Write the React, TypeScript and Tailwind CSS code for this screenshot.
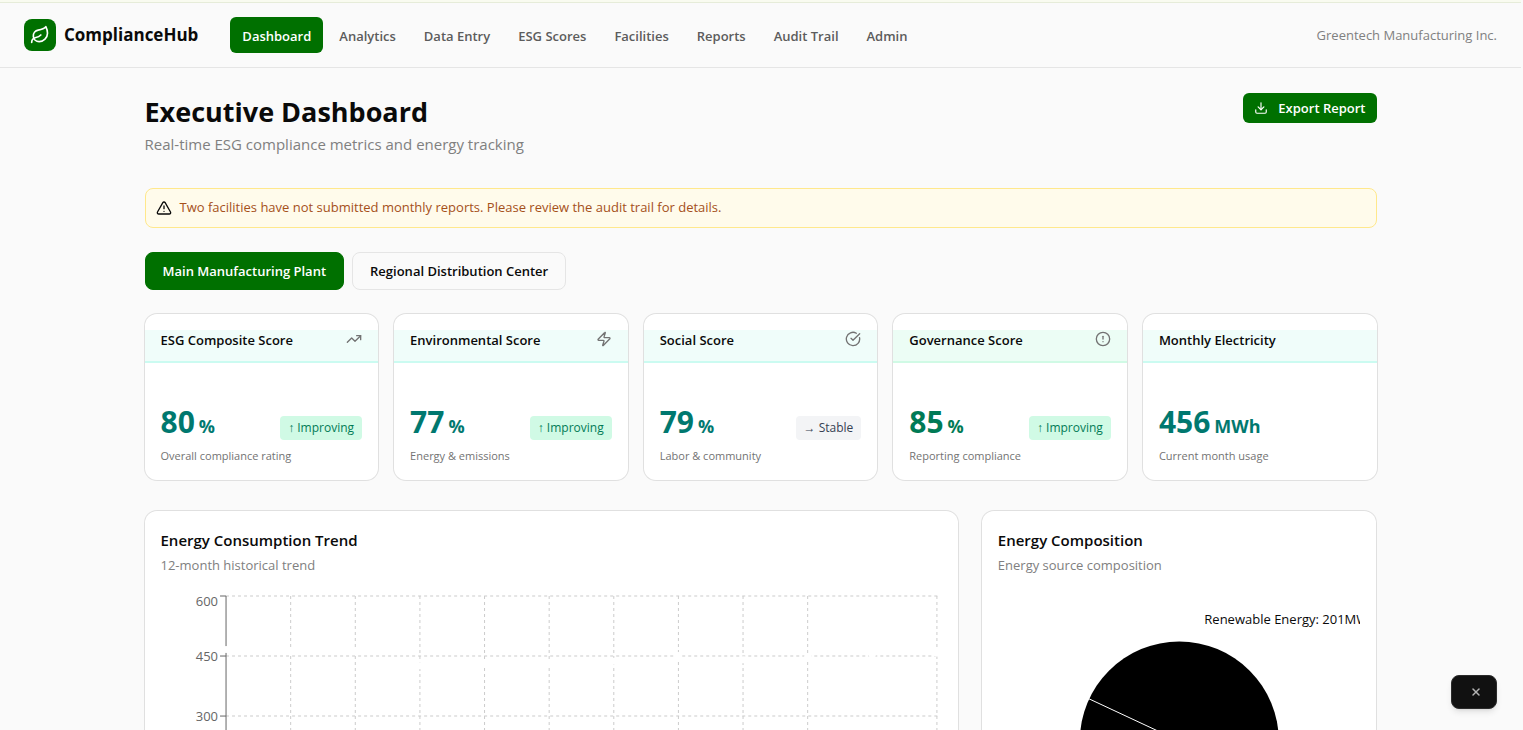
import React, { useState } from "react";
import {
  CircleAlert,
  CircleCheckBig,
  Download,
  Leaf,
  TrendingUp,
  TriangleAlert,
  X,
  Zap,
} from "lucide-react";

const NAV_ITEMS = [
  "Dashboard",
  "Analytics",
  "Data Entry",
  "ESG Scores",
  "Facilities",
  "Reports",
  "Audit Trail",
  "Admin",
];

const FACILITIES = ["Main Manufacturing Plant", "Regional Distribution Center"];

const METRICS = [
  {
    title: "ESG Composite Score",
    value: 80,
    unit: "%",
    trend: "up",
    note: "Overall compliance rating",
    icon: TrendingUp,
    header: "bg-teal-50 border-teal-100",
    color: "text-teal-700",
  },
  {
    title: "Environmental Score",
    value: 77,
    unit: "%",
    trend: "up",
    note: "Energy & emissions",
    icon: Zap,
    header: "bg-teal-50 border-teal-100",
    color: "text-teal-700",
  },
  {
    title: "Social Score",
    value: 79,
    unit: "%",
    trend: "stable",
    note: "Labor & community",
    icon: CircleCheckBig,
    header: "bg-teal-50 border-teal-100",
    color: "text-teal-700",
  },
  {
    title: "Governance Score",
    value: 85,
    unit: "%",
    trend: "up",
    note: "Reporting compliance",
    icon: CircleAlert,
    header: "bg-emerald-50 border-emerald-100",
    color: "text-emerald-700",
  },
  {
    title: "Monthly Electricity",
    value: 456,
    unit: "MWh",
    trend: null,
    note: "Current month usage",
    icon: null,
    header: "bg-teal-50 border-teal-100",
    color: "text-teal-700",
  },
];

// Monthly consumption in MWh
const CONSUMPTION = [466, 464, 463, 426, 431, 431, 437, 451, 441, 449, 453, 457];

const TICKS = [600, 450, 300, 150, 0];

function MetricCard({ metric }: { metric: (typeof METRICS)[number] }) {
  const Icon = metric.icon;

  return (
    <div className="bg-white rounded-xl ring-1 ring-black/10 py-4 overflow-hidden">
      <div
        className={`flex justify-between items-start px-4 pb-[11px] border-b-2 ${metric.header}`}
      >
        <h3 className="text-[13px] leading-5 font-semibold">{metric.title}</h3>
        {Icon && <Icon className="size-4 mt-px text-[#737373]" />}
      </div>
      <div className="px-4 pt-[41px]">
        <div className="flex justify-between items-end">
          <p className={`font-bold text-3xl leading-9 ${metric.color}`}>
            {metric.value}
            <span className="text-lg leading-7 ml-1">{metric.unit}</span>
          </p>
          {metric.trend === "up" && (
            <span className="bg-emerald-100 text-emerald-700 text-xs font-medium rounded px-2 py-1">
              ↑ Improving
            </span>
          )}
          {metric.trend === "stable" && (
            <span className="bg-gray-100 text-gray-700 text-xs font-medium rounded px-2 py-1">
              → Stable
            </span>
          )}
        </div>
        <p className="text-[11px] leading-4 text-[#737373] mt-2">{metric.note}</p>
      </div>
    </div>
  );
}

function TrendChart() {
  const left = 65;
  const step = 64.6;
  const top = 5;
  const yFor = (value: number) => top + ((600 - value) / 600) * 240;
  const points = CONSUMPTION.map((v, i) => ({ x: left + i * step, y: yFor(v) }));

  return (
    <svg
      viewBox="0 0 781 280"
      className="w-full h-auto mt-4 text-[13px]"
      role="img"
      aria-label="Energy consumption by month"
    >
      <g stroke="#cccccc" strokeDasharray="3 3">
        {TICKS.map((tick) => (
          <line key={tick} x1={left} x2={776} y1={yFor(tick)} y2={yFor(tick)} />
        ))}
        {[1, 2, 3, 4, 5, 6, 7, 8, 9, 11].map((i) => (
          <line
            key={i}
            x1={left + i * step}
            x2={left + i * step}
            y1={top}
            y2={245}
          />
        ))}
      </g>
      <line x1={left} x2={left} y1={top} y2={245} stroke="#666666" />
      {TICKS.map((tick) => (
        <g key={tick}>
          <line x1={left - 6} x2={left} y1={yFor(tick)} y2={yFor(tick)} stroke="#666666" />
          <text
            x={left - 8}
            y={tick === 600 ? 15 : yFor(tick) + 5}
            textAnchor="end"
            fill="#666666"
          >
            {tick}
          </text>
        </g>
      ))}
      {points.map((p) => (
        <circle key={p.x} cx={p.x} cy={p.y} r="3.5" fill="#ffffff" />
      ))}
    </svg>
  );
}

function CompositionChart() {
  return (
    <svg
      className="w-full h-[300px] mt-4 text-[13px]"
      role="img"
      aria-label="Energy by source"
    >
      <svg x="50%" y="50%" overflow="visible">
        <circle r="99.5" fill="#000000" />
        <path d="M0 0L-90.6 -42.3M0 0L100 0" stroke="#ffffff" />
        <text x="25" y="-117" fill="#0a0a0a">
          Renewable Energy: 201MWh
        </text>
      </svg>
    </svg>
  );
}

export default function App() {
  const [page, setPage] = useState("Dashboard");
  const [facility, setFacility] = useState(FACILITIES[0]);
  const [panelOpen, setPanelOpen] = useState(true);

  return (
    <div className="min-h-screen bg-[#fafafa] text-[#0a0a0a] font-['Open_Sans','Noto_Sans',sans-serif] pr-0.5">
      <div className="h-[3px] bg-[#f9fbf0] border-b border-[#e6ecd9]" />
      <header className="flex items-center h-[65px] px-6 border-b border-[#e5e5e5]">
        <div className="flex items-center gap-2 mr-8">
          <div className="flex items-center justify-center size-8 rounded-lg bg-[#007000] text-white">
            <Leaf className="size-5" />
          </div>
          <span className="text-[17px] font-bold">ComplianceHub</span>
        </div>
        <nav className="flex items-center gap-1">
          {NAV_ITEMS.map((item) => (
            <a
              key={item}
              href="#"
              onClick={() => setPage(item)}
              className={`px-3 pt-[9px] pb-[7px] rounded-md text-[13px] leading-5 font-semibold ${
                page === item ? "bg-[#007000] text-white" : "text-[#5c5c5c]"
              }`}
            >
              {item}
            </a>
          ))}
        </nav>
        <span className="ml-auto pt-0.5 text-[13px] text-[#808080]">
          Greentech Manufacturing Inc.
        </span>
      </header>

      <main className="max-w-7xl mx-auto p-6">
        <div className="flex justify-between items-start">
          <div>
            <h1 className="text-[27px] leading-10 font-bold">Executive Dashboard</h1>
            <p className="text-[15px] leading-6 text-[#808080]">
              Real-time ESG compliance metrics and energy tracking
            </p>
          </div>
          <button className="flex items-center gap-2.5 h-[30px] px-[11px] mt-px rounded-md bg-[#007000] text-white text-[13px] font-semibold">
            <Download className="size-3.5" />
            <span className="pt-0.5">Export Report</span>
          </button>
        </div>

        <div className="flex items-center gap-2 h-10 px-2.5 mt-8 rounded-lg border border-[#ffe88c] bg-[#fffbeb]">
          <TriangleAlert className="size-4" />
          <p className="text-[13px] text-[#a5501a]">
            Two facilities have not submitted monthly reports. Please review the
            audit trail for details.
          </p>
        </div>

        <div className="flex gap-2 mt-6">
          {FACILITIES.map((name) => (
            <button
              key={name}
              onClick={() => setFacility(name)}
              className={`h-[38px] px-[17px] pt-0.5 rounded-lg border text-[13px] font-semibold ${
                facility === name
                  ? "bg-[#007000] border-[#007000] text-white"
                  : "border-[#e5e5e5]"
              }`}
            >
              {name}
            </button>
          ))}
        </div>

        <div className="grid grid-cols-5 gap-4 mt-6">
          {METRICS.map((metric) => (
            <MetricCard key={metric.title} metric={metric} />
          ))}
        </div>

        <div className="grid grid-cols-3 gap-6 mt-[31px]">
          <section className="col-span-2 bg-white rounded-xl ring-1 ring-black/10 p-4">
            <h2 className="text-[15px] leading-[26px] font-semibold">
              Energy Consumption Trend
            </h2>
            <p className="text-[13px] leading-5 text-[#808080] mt-0.5">
              12-month historical trend
            </p>
            <TrendChart />
          </section>
          <section className="bg-white rounded-xl ring-1 ring-black/10 p-4">
            <h2 className="text-[15px] leading-[26px] font-semibold">
              Energy Composition
            </h2>
            <p className="text-[13px] leading-5 text-[#808080] mt-0.5">
              Energy source composition
            </p>
            <CompositionChart />
          </section>
        </div>
      </main>

      {panelOpen && (
        <button
          aria-label="Close"
          onClick={() => setPanelOpen(false)}
          className="fixed right-[26px] bottom-[21px] flex items-center justify-center w-[46px] h-[34px] pl-1 rounded-lg bg-[#111111] border border-[#2b2b2b] text-[#b3b3b3] shadow-md"
        >
          <X className="size-3" strokeWidth={3} />
        </button>
      )}
    </div>
  );
}
